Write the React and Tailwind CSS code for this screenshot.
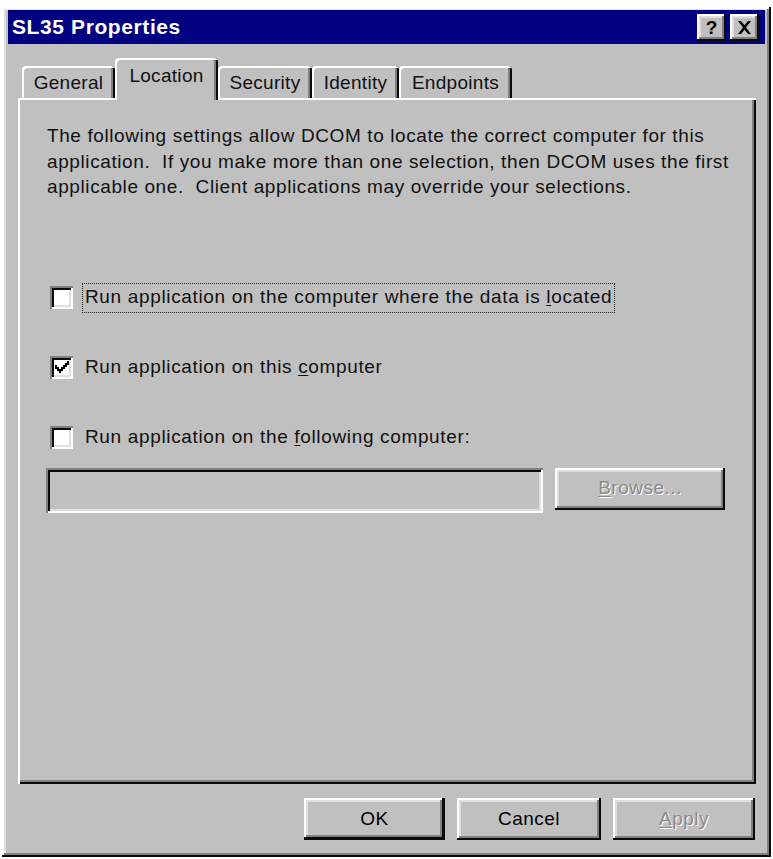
import { useState } from 'react'

const FONT = { fontFamily: '"Liberation Sans", Arial, sans-serif' }

const RAISED =
  'shadow-[inset_-2px_-2px_0_#0a0a0a,inset_2px_2px_0_#ffffff,inset_-4px_-4px_0_#808080,inset_4px_4px_0_#dfdfdf]'
const SUNKEN =
  'shadow-[inset_2px_2px_0_#808080,inset_-2px_-2px_0_#ffffff,inset_4px_4px_0_#0a0a0a,inset_-4px_-4px_0_#dfdfdf]'

const TABS = [
  { id: 'general', label: 'General', w: 'w-[93px]' },
  { id: 'location', label: 'Location', w: 'w-[103px]' },
  { id: 'security', label: 'Security', w: 'w-[94px]' },
  { id: 'identity', label: 'Identity', w: 'w-[87px]' },
  { id: 'endpoints', label: 'Endpoints', w: 'w-[113px]' },
]

function TitleButton({ children }) {
  return (
    <button
      className={`h-[27px] w-[29px] bg-[#c0c0c0] flex items-center justify-center text-black font-bold text-[19px] leading-none ${RAISED}`}
    >
      {children}
    </button>
  )
}

function Checkbox({ checked, onChange }) {
  return (
    <button
      onClick={onChange}
      className={`h-[23px] w-[23px] shrink-0 bg-white flex items-center justify-center ${SUNKEN}`}
    >
      {checked && (
        <svg width="14" height="14" viewBox="0 0 7 7">
          <path d="M0 2h1v1h1v1h1V3h1V2h1V1h1V0h1v2h-1v1h-1v1h-1v1h-1v1H2V5H1V4H0z" fill="#000" />
        </svg>
      )}
    </button>
  )
}

function Button({ children, disabled, isDefault, className = '' }) {
  return (
    <button
      disabled={disabled}
      className={[
        'h-[42px] shrink-0 bg-[#c0c0c0] text-[19px] tracking-[0.5px] flex items-center justify-center',
        isDefault
          ? 'shadow-[inset_-3px_-3px_0_#0a0a0a,inset_2px_2px_0_#ffffff,inset_-5px_-5px_0_#808080,inset_4px_4px_0_#dfdfdf]'
          : RAISED,
        disabled ? 'text-[#8a8a8a] [text-shadow:1px_1px_0_#ffffff]' : 'text-black',
        className,
      ].join(' ')}
    >
      {children}
    </button>
  )
}

export default function App() {
  const [tab, setTab] = useState('location')
  const [opts, setOpts] = useState({ data: false, local: true, remote: false })

  const toggle = (k) => setOpts((o) => ({ ...o, [k]: !o[k] }))

  return (
    <div className="w-[773px] h-[859px] bg-white pt-[7px] pl-[2px]" style={FONT}>
      <div
        className={`w-[769px] h-[850px] bg-[#c0c0c0] pt-[3px] px-[6px] flex flex-col ${RAISED}`}
      >
        {/* Title bar */}
        <div className="h-[34px] bg-[#000080] flex items-center justify-between pl-[4px] pr-[6px]">
          <span className="text-white font-bold text-[21px] tracking-[0.6px]">SL35 Properties</span>
          <div className="flex gap-[4px]">
            <TitleButton>?</TitleButton>
            <TitleButton>
              <svg width="15" height="13" viewBox="0 0 15 13">
                <path d="M1 0h3l3.5 4.2L11 0h3L9 6.5 14 13h-3L7.5 8.8 4 13H1l5-6.5z" fill="#000" />
              </svg>
            </TitleButton>
          </div>
        </div>

        {/* Tabs */}
        <div className="mt-[14px] pl-[10px] pr-[9px]">
          <div className="flex items-end h-[40px] pl-[4px]">
            {TABS.map((t) => {
              const active = t.id === tab
              return (
                <button
                  key={t.id}
                  onClick={() => setTab(t.id)}
                  className={[
                    t.w,
                    'bg-[#c0c0c0] text-[19px] tracking-[0.3px] text-[#111] rounded-t-[4px] flex items-center justify-center',
                    'shadow-[inset_2px_2px_0_#ffffff,inset_-2px_0_0_#0a0a0a,inset_-4px_0_0_#808080]',
                    active ? 'h-[42px] -mb-[2px] relative z-10 pb-[6px]' : 'h-[32px] pt-[2px]',
                  ].join(' ')}
                >
                  {t.label}
                </button>
              )
            })}
          </div>

          {/* Panel */}
          <div className="h-[686px] pt-[25px] pl-[29px] pr-[20px] shadow-[inset_2px_2px_0_#ffffff,inset_-2px_-2px_0_#0a0a0a,inset_-4px_-4px_0_#808080]">
            <p className="text-[19px] leading-[25.5px] tracking-[0.6px] text-[#111] whitespace-pre">
              {'The following settings allow DCOM to locate the correct computer for this\napplication.  If you make more than one selection, then DCOM uses the first\napplicable one.  Client applications may override your selections.'}
            </p>

            <div className="mt-[83px] flex flex-col gap-[40px] pl-[3px] text-[19px] tracking-[0.65px] text-[#111]">
              <div className="flex items-center gap-[9px] h-[30px]">
                <Checkbox checked={opts.data} onChange={() => toggle('data')} />
                <span className="border border-dotted border-[#222] h-[30px] flex items-center px-[2px]">
                  Run application on the computer where the data is&nbsp;<u className="underline-offset-2">l</u>ocated
                </span>
              </div>
              <div className="flex items-center gap-[12px] h-[30px]">
                <Checkbox checked={opts.local} onChange={() => toggle('local')} />
                <span>
                  Run application on this <u className="underline-offset-2">c</u>omputer
                </span>
              </div>
              <div className="flex items-center gap-[12px] h-[30px]">
                <Checkbox checked={opts.remote} onChange={() => toggle('remote')} />
                <span>
                  Run application on the <u className="underline-offset-2">f</u>ollowing computer:
                </span>
              </div>
            </div>

            <div className="mt-[15px] flex items-start gap-[12px] -ml-[1px]">
              <div className={`w-[497px] h-[45px] shrink-0 bg-[#c0c0c0] ${SUNKEN}`} />
              <Button disabled className="w-[170px]">
                <span>
                  <u className="underline-offset-2">B</u>rowse...
                </span>
              </Button>
            </div>
          </div>
        </div>

        {/* Footer buttons */}
        <div className="mt-[14px] flex justify-end gap-[12px] pr-[10px]">
          <Button isDefault className="w-[141px]">OK</Button>
          <Button className="w-[144px]">Cancel</Button>
          <Button disabled className="w-[142px]">
            <span>
              <u className="underline-offset-2">A</u>pply
            </span>
          </Button>
        </div>
      </div>
    </div>
  )
}
